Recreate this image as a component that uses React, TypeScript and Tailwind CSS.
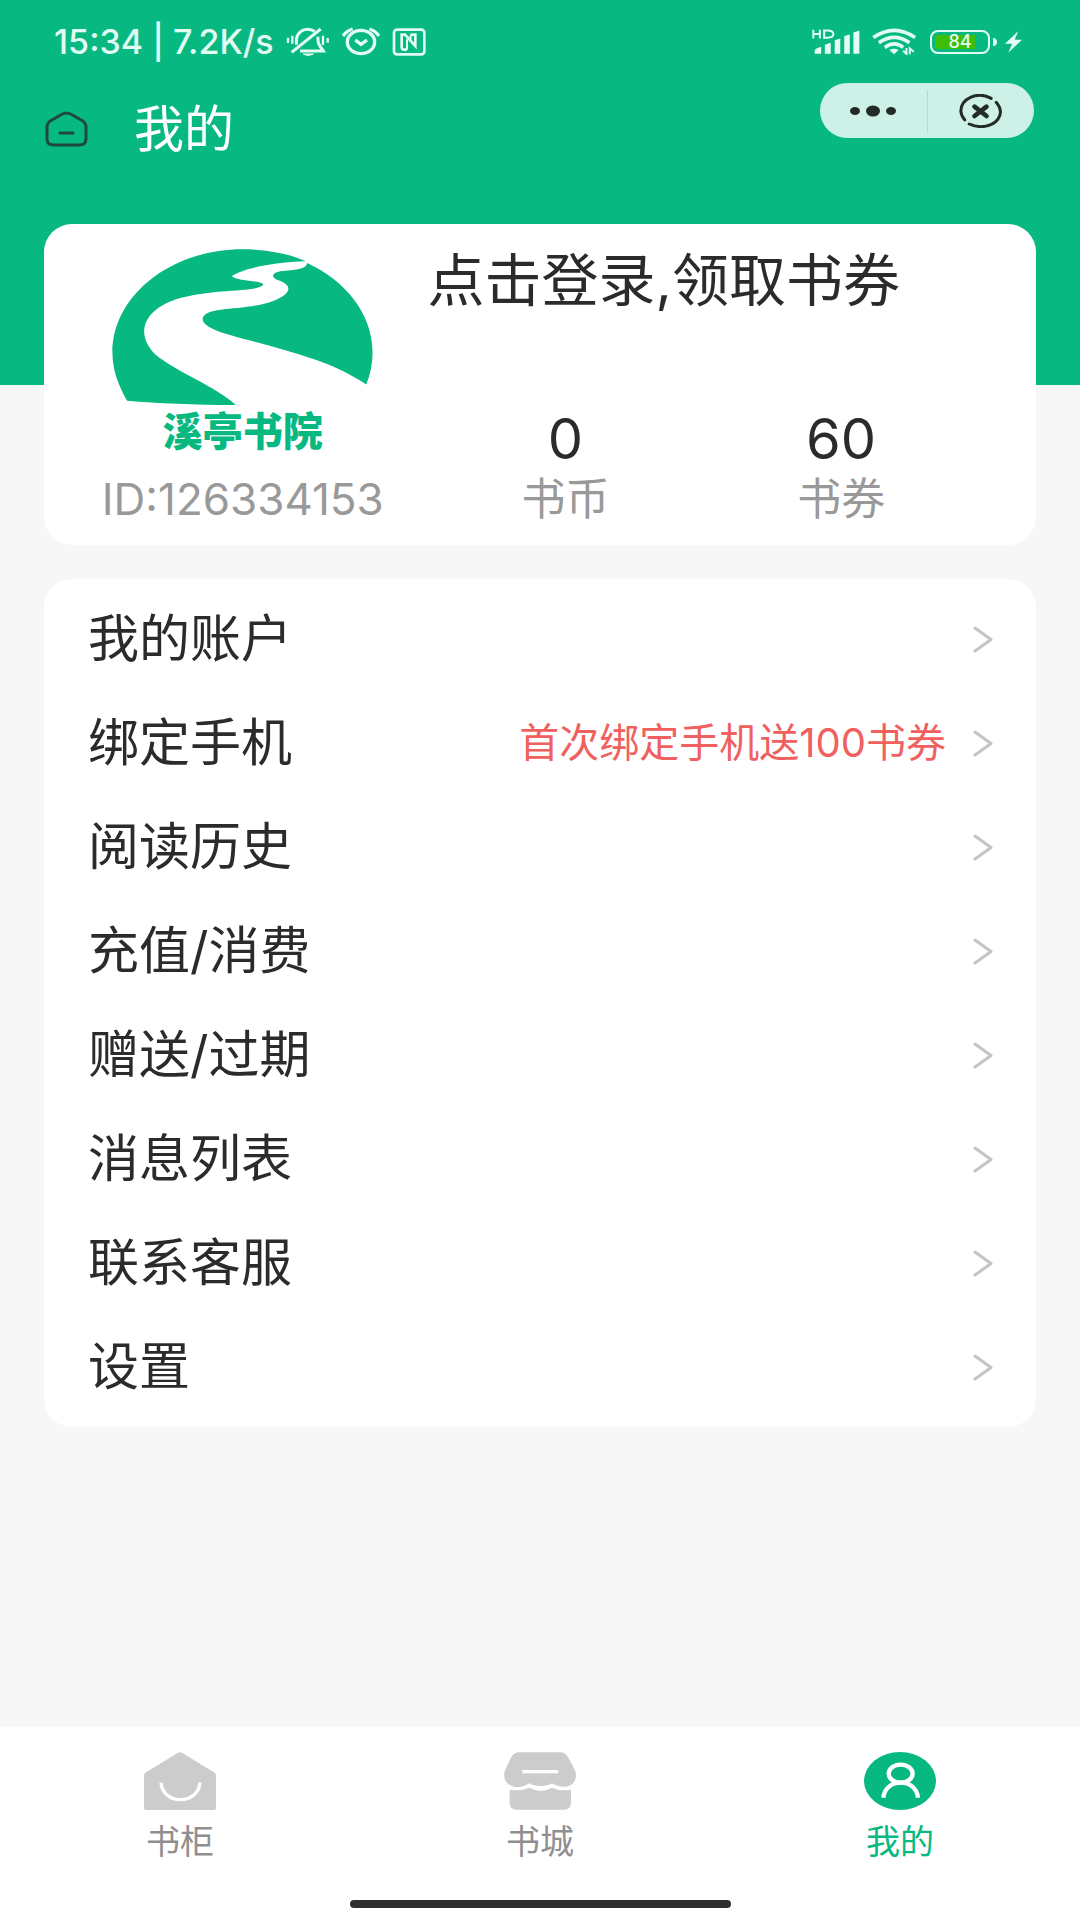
import React from "react";

type MenuItem = { label: string; note?: string };

const menu: MenuItem[] = [
  { label: "我的账户" },
  { label: "绑定手机", note: "首次绑定手机送100书券" },
  { label: "阅读历史" },
  { label: "充值/消费" },
  { label: "赠送/过期" },
  { label: "消息列表" },
  { label: "联系客服" },
  { label: "设置" },
];

function MuteIcon() {
  return (
    <svg className="h-[30px] w-[44px]" viewBox="762 47 132 90" fill="none" stroke="currentColor" strokeWidth="9" aria-hidden="true">
      <path d="M768 79v16M781 73v24M873 73v28M887 80v14" strokeWidth="7" />
      <path d="M848 60C815 43 788 65 794 100M858 76C856 98 864 104 874 119H804" />
      <path d="M866 53 779 123" />
      <path d="M814 128q14 9 30 0z" fill="currentColor" strokeWidth="3" />
    </svg>
  );
}

function AlarmIcon() {
  return (
    <svg className="h-[30px] w-[38px]" viewBox="932 47 114 90" fill="none" stroke="currentColor" strokeWidth="10" aria-hidden="true">
      <ellipse cx="989" cy="92" rx="41" ry="35" />
      <path d="M972 86l17 13 18-13" />
      <path d="M935 74q10-15 29-21M1043 74q-10-15-29-21" />
    </svg>
  );
}

function NfcIcon() {
  return (
    <svg className="h-[28px] w-[34px]" viewBox="1087 50 100 84" fill="none" stroke="currentColor" strokeWidth="8" aria-hidden="true">
      <rect x="1092" y="55" width="91" height="74" rx="9" />
      <path d="M1131 115h-8q-8 0-8-8V70h10l31 34V70h-14" />
      <path d="M1131 84v31M1142 70v14" strokeWidth="6" />
    </svg>
  );
}

function SignalIcon() {
  return (
    <svg className="h-[26px] w-[48px]" viewBox="98 54 146 78" fill="currentColor" aria-hidden="true">
      <path d="M106 129v-10q2-8 20-11v21zM137 129v-28l18-6v34zM167 129V88l17-6v47zM196 129V75l17-5v59zM224 129V64l18-6v71z" />
      <path d="M102 56v26M102 69h20M122 56v26M135 58v22h10q18 0 18-11t-18-11z" fill="none" stroke="currentColor" strokeWidth="6" />
    </svg>
  );
}

function WifiIcon() {
  return (
    <svg className="h-[27px] w-[44px]" viewBox="278 51 132 82" fill="none" stroke="currentColor" strokeWidth="11" aria-hidden="true">
      <path d="M281 80q64-44 127 0M298 96q47-33 93 0M316 110q29-21 56 0" />
      <path d="M330 118q14-8 28 0l-14 13z" fill="currentColor" stroke="none" />
      <path d="M382 112v18l-10-10M392 131v-18l12 10" strokeWidth="6" />
    </svg>
  );
}

function Logo() {
  return (
    <svg className="h-[157px] w-[261px] overflow-visible" viewBox="98 55 784 472" fill="#07b981" role="img" aria-label="溪亭书院">
      <path d="M143 511C118 468 99 420 99 367C99 195 274 56 490 56C560 56 630 68 680 92C590 95 500 110 458 136C470 152 545 148 553 162C540 186 400 172 290 206C185 242 170 316 228 372C290 424 410 468 470 524Q280 523 143 511z" />
      <path d="M684 97C800 150 881 250 881 367Q881 416 862 462C770 402 690 380 600 354C510 325 370 305 370 265C376 225 500 242 580 212C640 190 640 164 600 150C570 140 580 124 610 121C660 118 684 112 684 97z" />
    </svg>
  );
}

function StatusBar() {
  return (
    <div className="flex h-[83px] items-center justify-between pr-[58px] pl-[54px] text-[#e2fbf3]">
      <div className="flex items-center">
        <span className="text-[34px] leading-10 font-medium">15:34 | 7.2K/s</span>
        <span className="ml-3"><MuteIcon /></span>
        <span className="ml-3"><AlarmIcon /></span>
        <span className="ml-3"><NfcIcon /></span>
      </div>
      <div className="flex items-center">
        <SignalIcon />
        <span className="ml-3"><WifiIcon /></span>
        <span className="ml-[14px] flex h-6 w-[60px] items-center justify-center rounded-lg border-2 border-current p-[3px]">
          <span className="flex h-full w-full items-center justify-center bg-gradient-to-r from-[#3fbd0b] from-80% to-transparent to-80% text-lg leading-none font-medium">84</span>
        </span>
        <span className="ml-[3px] h-2 w-1 rounded-r bg-current" />
        <svg className="ml-2 h-[22px] w-[17px]" viewBox="672 60 52 66" fill="currentColor" aria-hidden="true">
          <path d="M712 60 672 98h22l-12 28 42-40h-22z" />
        </svg>
      </div>
    </div>
  );
}

function TitleBar() {
  return (
    <div className="flex h-[92px] items-center pr-[46px] pl-[45px]">
      <button aria-label="首页" className="text-[#20483c]">
        <svg className="h-9 w-[43px]" viewBox="0 0 43 36" fill="none" stroke="currentColor" strokeWidth="3" strokeLinecap="round" strokeLinejoin="round" aria-hidden="true">
          <path d="M17 3.200Q21.500 .6 26 3.200L37 9.500Q41 12 41 16V28Q41 34 34 34H9Q2 34 2 28V16Q2 12 6 9.500z" />
          <path d="M15 22H28" />
        </svg>
      </button>
      <h1 className="ml-[46px] text-[50px] leading-[60px] text-white">我的</h1>
      <div className="ml-auto flex h-[55px] w-[214px] items-center self-start rounded-full bg-[#cdf1e6] text-[#232b29]">
        <button aria-label="更多" className="flex h-full flex-1 items-center justify-center">
          <svg className="h-3 w-[46px]" viewBox="0 0 46 12" fill="currentColor" aria-hidden="true">
            <ellipse cx="5" cy="6" rx="5" ry="4" />
            <ellipse cx="23" cy="6" rx="7" ry="5.500" />
            <ellipse cx="41" cy="6" rx="5" ry="4" />
          </svg>
        </button>
        <span className="h-[42px] w-px bg-[#b4dacd]" />
        <button aria-label="关闭" className="flex h-full flex-1 items-center justify-center">
          <svg className="h-[34px] w-[43px]" viewBox="538 250 128 102" fill="none" stroke="currentColor" strokeLinecap="round" aria-hidden="true">
            <path d="M634 263C590 240 543 265 543 301Q544 316 555 328" strokeWidth="9" />
            <path d="M649 275C680 312 648 348 602 348Q584 347 568 340" strokeWidth="9" />
            <path d="M584 288l36 28M620 288l-36 28" strokeWidth="14" />
          </svg>
        </button>
      </div>
    </div>
  );
}

function Stat({ value, label }: { value: string; label: string }) {
  return (
    <div className="flex flex-col items-center">
      <span className="text-[56px] leading-[60px] text-[#2b2b2b]">{value}</span>
      <span className="text-[44px] leading-[60px] text-[#999999]">{label}</span>
    </div>
  );
}

function ProfileCard() {
  return (
    <section className="mx-11 -mt-[161px] grid grid-cols-[370fr_552fr] rounded-[28px] bg-white pt-[25px] pr-[57px] pb-4 pl-[14px]">
      <div className="flex flex-col items-center">
        <Logo />
        <span className="mt-1 text-[40px] leading-[44px] font-black text-[#07b981]">溪亭书院</span>
        <span className="mt-auto text-[44px] leading-[60px] text-[#999999]">ID:126334153</span>
      </div>
      <div className="flex flex-col justify-between">
        <button className="self-start text-[57px] leading-[64px] whitespace-nowrap text-[#2b2b2b]">点击登录,领取书券</button>
        <div className="mt-[96px] grid grid-cols-2">
          <Stat value="0" label="书币" />
          <Stat value="60" label="书券" />
        </div>
      </div>
    </section>
  );
}

function MenuCard() {
  return (
    <ul className="mx-11 mt-[34px] rounded-[28px] bg-white py-2">
      {menu.map((item) => (
        <li key={item.label}>
          <button className="flex h-[104px] w-full items-center pr-[43px] pl-11 text-left">
            <span className="text-[51px] leading-[60px] text-[#2b2b2b]">{item.label}</span>
            {item.note && <span className="ml-auto text-[40px] leading-[60px] text-[#f0605f]">{item.note}</span>}
            <svg className={item.note ? "ml-[26px] h-[27px] w-[21px]" : "ml-auto h-[27px] w-[21px]"} viewBox="0 0 21 27" fill="none" stroke="#c4c4c4" strokeWidth="3" strokeLinecap="round" strokeLinejoin="round" aria-hidden="true">
              <path d="M3 2 19 13.500 3 25" />
            </svg>
          </button>
        </li>
      ))}
    </ul>
  );
}

function TabBar() {
  return (
    <footer className="flex flex-col bg-white pt-[25px]">
      <nav className="grid grid-cols-3 text-[34px] leading-10 text-[#8f8f8f]">
        <a href="#shelf" className="flex flex-col items-center gap-3">
          <svg className="h-[58px] w-[72px]" viewBox="132 95 216 174" aria-hidden="true">
            <path d="M234 97q6-3 12 0l98 60q4 3 4 8v98q0 6-6 6H138q-6 0-6-6v-98q0-5 4-8z" fill="#cccccc" />
            <path d="M183 187C188 255 294 255 300 187" fill="none" stroke="white" strokeWidth="10" />
          </svg>
          书柜
        </a>
        <a href="#store" className="flex flex-col items-center gap-3">
          <svg className="h-[58px] w-[72px]" viewBox="102 95 216 174" fill="#cccccc" aria-hidden="true">
            <path d="M148 96H270Q286 96 294 110L315 150C324 172 312 198 286 199Q264 201 246 189Q234 197 212 197Q190 197 178 189Q160 201 140 200C110 198 96 174 105 150L124 110Q132 96 148 96z" />
            <path d="M119 208Q150 214 178 202Q196 212 212 212Q230 212 246 202Q272 214 303 208V248Q303 268 281 268H141Q119 268 119 248z" />
            <rect x="157" y="149" width="108" height="10" fill="white" />
          </svg>
          书城
        </a>
        <a href="#mine" aria-current="page" className="flex flex-col items-center gap-3 text-[#07b981]">
          <svg className="h-[58px] w-[72px]" viewBox="132 95 216 174" aria-hidden="true">
            <ellipse cx="240" cy="182" rx="108" ry="87" fill="#07b981" />
            <g fill="none" stroke="white" strokeWidth="13">
              <ellipse cx="242" cy="160" rx="36" ry="27" />
              <path d="M190 232C196 172 288 172 294 232" />
            </g>
          </svg>
          我的
        </a>
      </nav>
      <div className="mx-auto mt-[38px] mb-3 h-2 w-[381px] rounded-full bg-[#2e2e2e]" />
    </footer>
  );
}

export default function App() {
  return (
    <div className="flex min-h-screen flex-col bg-[#f7f7f7] font-['Inter','Noto_Sans_CJK_SC',sans-serif]" lang="zh-CN">
      <header className="min-h-[385px] bg-[#07b981]">
        <StatusBar />
        <TitleBar />
      </header>
      <main className="flex-1">
        <ProfileCard />
        <MenuCard />
      </main>
      <TabBar />
    </div>
  );
}
